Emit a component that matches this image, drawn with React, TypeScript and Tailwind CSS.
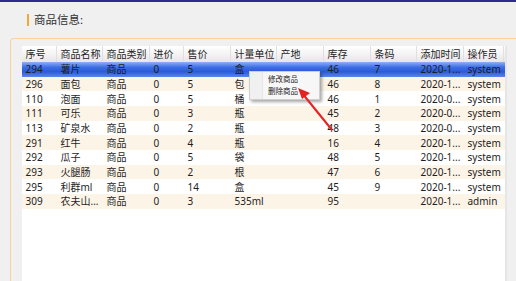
const cols = [35, 46, 47, 34, 47, 46, 47, 47, 46, 47, 40];
const heads = ["序号", "商品名称", "商品类别", "进价", "售价", "计量单位", "产地", "库存", "条码", "添加时间", "操作员"];

const rows = [
  ["294", "薯片", "商品", "0", "5", "盒", "", "46", "7", "2020-1...", "system"],
  ["296", "面包", "商品", "0", "5", "包", "", "46", "8", "2020-1...", "system"],
  ["110", "泡面", "商品", "0", "5", "桶", "", "46", "1", "2020-0...", "system"],
  ["111", "可乐", "商品", "0", "3", "瓶", "", "45", "2", "2020-0...", "system"],
  ["113", "矿泉水", "商品", "0", "2", "瓶", "", "48", "3", "2020-0...", "system"],
  ["291", "红牛", "商品", "0", "4", "瓶", "", "16", "4", "2020-1...", "system"],
  ["292", "瓜子", "商品", "0", "5", "袋", "", "48", "5", "2020-1...", "system"],
  ["293", "火腿肠", "商品", "0", "2", "根", "", "47", "6", "2020-1...", "system"],
  ["295", "利群ml", "商品", "0", "14", "盒", "", "45", "9", "2020-1...", "system"],
  ["309", "农夫山...", "商品", "0", "3", "535ml", "", "95", "", "2020-1...", "admin"],
];

const font = { fontFamily: '"Noto Sans", "Noto Sans CJK SC", sans-serif' };

function Row({ cells, i }: { cells: string[]; i: number }) {
  const bg =
    i === 0
      ? "bg-[linear-gradient(#8fb0f4,#3d6ee6_35%,#2a5ad8_65%,#5d86ea)]"
      : i % 2 === 1
        ? "bg-[#fdf4e8]"
        : "bg-white";
  return (
    <div className={`flex h-[14.67px] items-center ${bg}`}>
      {cells.map((c, j) => (
        <div key={j} style={{ width: cols[j] }} className="shrink-0 whitespace-nowrap pl-[4px] leading-[14px]">
          {c}
        </div>
      ))}
    </div>
  );
}

export default function App() {
  return (
    <div
      style={font}
      className="relative h-[281px] w-[516px] overflow-hidden border-t-2 border-[#2f2b8c] bg-[#f0f0f0] text-[#1e1e1e]"
    >
      <div className="flex h-[36px] items-center gap-[5px] pl-[27px]">
        <div className="h-[12px] w-[2px] bg-[#f5a83a]" />
        <span className="text-[11.5px] text-[#333]">商品信息:</span>
      </div>

      <div className="ml-[10px] h-full rounded-tl-[4px] border-l-[1.5px] border-t border-[#fbd39a] pl-[10.5px] pt-[7px]">
        <div className="flex h-full">
          <div className="h-full w-[483px] bg-white text-[10px]">
            <div className="flex h-[16px] bg-[linear-gradient(#ffffff,#f4f4f4_50%,#e6e6e6)]">
              {heads.map((h, j) => (
                <div
                  key={h}
                  style={{ width: cols[j] }}
                  className="flex shrink-0 items-center whitespace-nowrap border-r border-[#e0e0e0] pl-[4px] leading-[14px]"
                >
                  {h}
                </div>
              ))}
            </div>
            {rows.map((r, i) => (
              <Row key={r[0]} cells={r} i={i} />
            ))}
          </div>
          <div className="h-full w-[2px] bg-[#e6e6e6]" />
        </div>
      </div>

      <div className="absolute left-[249px] top-[69px] flex h-[29px] w-[71px] border border-[#cfcfcf] bg-[#f7f7f7] shadow-[2px_2px_3px_rgba(0,0,0,0.35)]">
        <div className="w-[13px] border-r border-[#e6e6e6] bg-[#f0f0f0]" />
        <div className="flex flex-col justify-center gap-[4px] pl-[5px] text-[7.5px] leading-none text-[#222]">
          <span>修改商品</span>
          <span>删除商品</span>
        </div>
      </div>

      <svg className="absolute left-0 top-0" width="516" height="281">
        <line x1="332" y1="128" x2="302" y2="91" stroke="#e52222" strokeWidth="2" />
        <polygon points="298,86 310,91 302,97" fill="#e52222" />
      </svg>
    </div>
  );
}
